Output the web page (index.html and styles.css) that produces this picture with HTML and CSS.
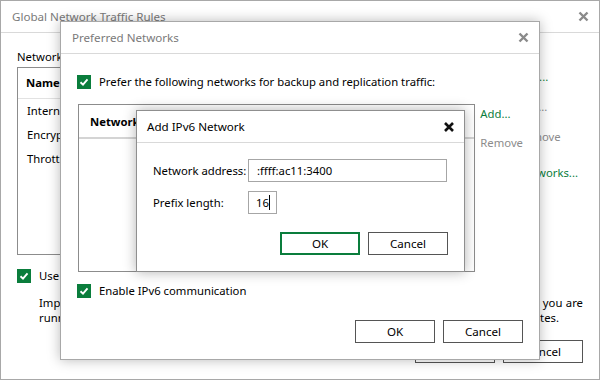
FILE: index.html
```html
<!DOCTYPE html>
<html lang="en">
<head>
    <meta charset="UTF-8">
    <title>Add IPv6 Network</title>
    <link rel="stylesheet" href="styles.css">
</head>
<body>
    <!-- back window -->
    <div class="window win-global">
        <div class="titlebar">
            <span class="title">Global Network Traffic Rules</span>
            <svg class="close" width="11" height="11" viewBox="0 0 11 11"><path d="M1.5 1.5L9.5 9.5M9.5 1.5L1.5 9.5"/></svg>
        </div>
        <div class="body">
            <div class="label">Network traffic rules:</div>
            <div class="list-row">
                <div class="grid rules">
                    <div class="grid-head">Name</div>
                    <div class="grid-line">Internet</div>
                    <div class="grid-line">Encryption</div>
                    <div class="grid-line">Throttling</div>
                </div>
                <div class="side">
                    <span class="link">Add...</span>
                    <span class="link off">Edit...</span>
                    <span class="link off">Remove</span>
                    <span class="link gap">Networks...</span>
                </div>
            </div>
            <div class="check-row">
                <span class="check"><svg width="14" height="14" viewBox="0 0 14 14"><path d="M3.5 7.2L6 9.6L10.5 4.4"/></svg></span>
                <span>Use multiple upload streams per job</span>
            </div>
            <div class="note">
                <div class="note-line">Important: enable this option only when the network link is not saturated by other traffic and you are</div>
                <div class="note-line last">running backup and replication jobs over slow WAN connections between remote branch sites.</div>
            </div>
            <div class="buttons">
                <button class="btn">OK</button>
                <button class="btn">Cancel</button>
            </div>
        </div>
    </div>

    <!-- middle window -->
    <div class="window win-preferred">
        <div class="titlebar">
            <span class="title">Preferred Networks</span>
            <svg class="close" width="11" height="11" viewBox="0 0 11 11"><path d="M1.5 1.5L9.5 9.5M9.5 1.5L1.5 9.5"/></svg>
        </div>
        <div class="body">
            <div class="check-row">
                <span class="check"><svg width="14" height="14" viewBox="0 0 14 14"><path d="M3.5 7.2L6 9.6L10.5 4.4"/></svg></span>
                <span>Prefer the following networks for backup and replication traffic:</span>
            </div>
            <div class="list-row">
                <div class="grid nets">
                    <div class="grid-head">Network</div>
                </div>
                <div class="side">
                    <span class="link">Add...</span>
                    <span class="link off">Remove</span>
                </div>
            </div>
            <div class="check-row ipv6">
                <span class="check"><svg width="14" height="14" viewBox="0 0 14 14"><path d="M3.5 7.2L6 9.6L10.5 4.4"/></svg></span>
                <span>Enable IPv6 communication</span>
            </div>
            <div class="buttons">
                <button class="btn">OK</button>
                <button class="btn">Cancel</button>
            </div>
        </div>
    </div>

    <!-- front window -->
    <div class="window win-add active">
        <div class="titlebar">
            <span class="title">Add IPv6 Network</span>
            <svg class="close" width="12" height="12" viewBox="0 0 12 12"><path d="M2 2L10 10M10 2L2 10"/></svg>
        </div>
        <div class="body">
            <div class="field">
                <label>Network address:</label>
                <div class="input wide">:ffff:ac11:3400</div>
            </div>
            <div class="field">
                <label>Prefix length:</label>
                <div class="input short">16<span class="caret"></span></div>
            </div>
            <div class="buttons">
                <button class="btn default">OK</button>
                <button class="btn">Cancel</button>
            </div>
        </div>
    </div>
</body>
</html>
```

FILE: styles.css
```css
* {
    margin: 0;
    padding: 0;
    box-sizing: border-box;
}

body {
    width: 600px;
    height: 380px;
    position: relative;
    background-color: #ffffff;
    font-family: "Noto Sans", "Open Sans", sans-serif;
    font-size: 11.3px;
    color: #000;
    overflow: hidden;
}

.window {
    position: absolute;
    background-color: #fff;
    border: 1px solid #a8a8a8;
    display: flex;
    flex-direction: column;
}

.titlebar {
    height: 32px;
    flex-shrink: 0;
    border-bottom: 1px solid #d9d9d9;
    display: flex;
    align-items: center;
    justify-content: space-between;
    padding: 0 10px 0 10px;
    color: #7a7a7a;
    font-size: 11.6px;
}

.close path {
    stroke: #8a8a8a;
    stroke-width: 2.4;
    fill: none;
}

.active .titlebar {
    color: #000;
}

.active .close path {
    stroke: #111;
    stroke-width: 2.6;
}

.body {
    flex-grow: 1;
    display: flex;
    flex-direction: column;
}

/* back window */
.win-global {
    left: 0;
    top: 0;
    width: 600px;
    height: 380px;
}

.win-global .titlebar {
    padding-left: 11px;
    padding-right: 10px;
}

.win-global .body {
    padding: 15px 16px 16px 16px;
}

.label {
    line-height: 18px;
}

.list-row {
    display: flex;
    gap: 5px;
}

.grid {
    border: 1px solid #8c8c8c;
    display: flex;
    flex-direction: column;
}

.grid-head {
    font-weight: bold;
    height: 33px;
    line-height: 32px;
    padding-left: 9px;
    border-bottom: 1px solid #e2e2e2;
}

.grid-line {
    height: 24px;
    line-height: 24px;
    padding-left: 9px;
}

.rules {
    margin-top: 1px;
    width: 496px;
    height: 188px;
}

.rules .grid-head {
    height: 31px;
    line-height: 30px;
    padding-left: 8px;
}

.rules .grid-line:first-of-type {
    margin-top: 1px;
}

.side {
    display: flex;
    flex-direction: column;
    padding-top: 2px;
}

.win-global .side {
    gap: 12px;
    padding-top: 2px;
}

.link {
    color: #0a7d3c;
    line-height: 18px;
}

.link.off {
    color: #8c8c8c;
}

.link.gap {
    margin-top: 6px;
}

.check-row {
    display: flex;
    align-items: center;
    gap: 8px;
    line-height: 18px;
}

.check {
    width: 14px;
    height: 14px;
    flex-shrink: 0;
    background-color: #0a7d3c;
    display: flex;
}

.check path {
    stroke: #fff;
    stroke-width: 1.9;
    fill: none;
}

.win-global .check-row {
    margin-top: 12px;
}

.note {
    margin-top: 10px;
    padding-left: 22px;
    line-height: 15px;
}

.note-line {
    text-align: justify;
    text-align-last: justify;
}

.note-line.last {
    padding-right: 24px;
}

.buttons {
    display: flex;
    justify-content: flex-end;
    gap: 8px;
    margin-top: auto;
}

.btn {
    width: 80px;
    height: 23px;
    border: 1px solid #555;
    background-color: #fff;
    font-family: inherit;
    font-size: 11.6px;
    color: #000;
}

.btn.default {
    border: 2px solid #0a7d3c;
}

/* middle window */
.win-preferred {
    left: 60px;
    top: 21px;
    width: 480px;
    height: 339px;
    box-shadow: 0 0 12px rgba(0, 0, 0, 0.28);
}

.win-preferred .titlebar {
    padding-left: 11px;
    padding-right: 10px;
}

.win-preferred .body {
    padding: 19px 16px 16px 16px;
}

.nets {
    margin-top: 13px;
    margin-left: 1px;
    width: 398px;
    height: 168px;
}

.nets .grid-head {
    height: 34px;
    line-height: 34px;
    padding-left: 11px;
    border-bottom: 2px solid #d4d4d4;
}

.win-preferred .side {
    margin-top: 13px;
    padding-top: 1px;
    gap: 11px;
}

.ipv6 {
    margin-top: 10px;
}

/* front window */
.win-add {
    left: 136px;
    top: 110px;
    width: 329px;
    height: 162px;
    border-color: #8f8f8f;
    box-shadow: 0 0 12px rgba(0, 0, 0, 0.3);
}

.win-add .titlebar {
    padding-left: 10px;
    padding-right: 9px;
}

.win-add .body {
    padding: 16px 16px 16px 16px;
}

.field {
    display: flex;
    align-items: center;
    margin-bottom: 9px;
}

.field label {
    width: 95px;
    flex-shrink: 0;
    white-space: nowrap;
}

.input {
    height: 23px;
    border: 1px solid #a6a6a6;
    padding-left: 8px;
    line-height: 21px;
    display: flex;
    align-items: center;
}

.input.wide {
    width: 199px;
}

.input.short {
    width: 29px;
    padding-left: 7px;
}

.caret {
    width: 1px;
    height: 15px;
    background-color: #000;
    margin-left: 0;
}
```
